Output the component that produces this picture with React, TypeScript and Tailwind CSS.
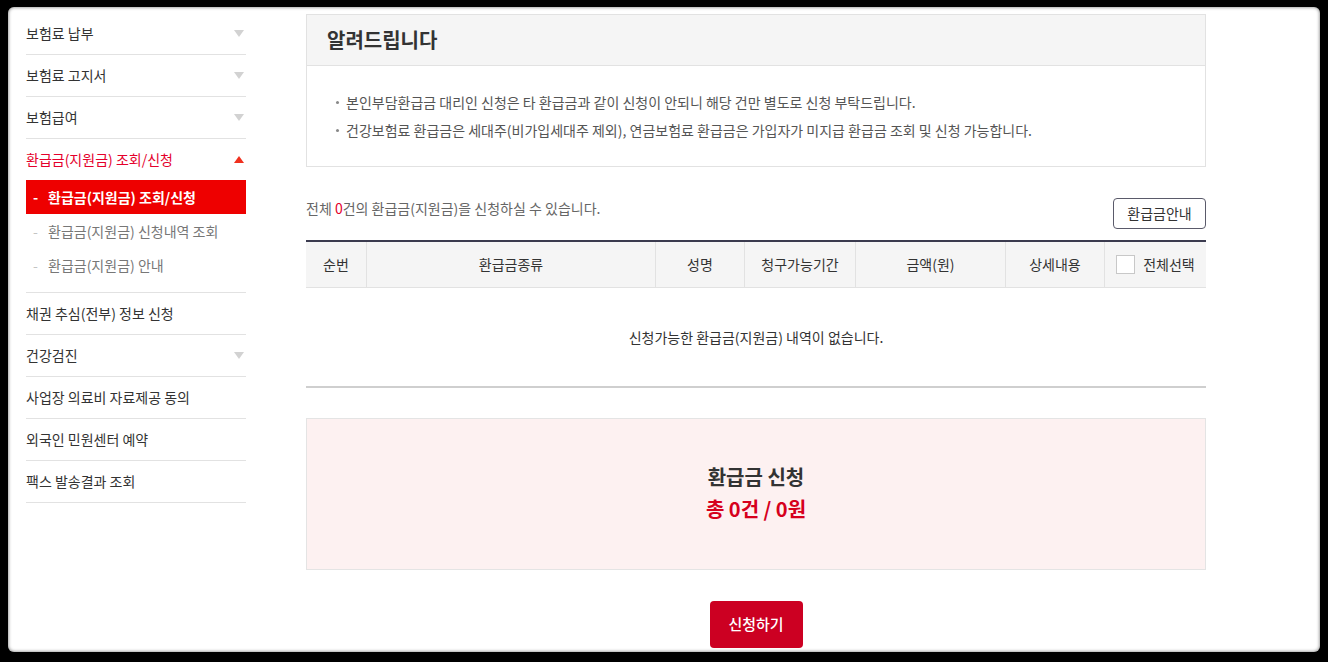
import React from "react"

const font = { fontFamily: '"Noto Sans CJK KR", "Noto Sans", sans-serif' }

type MenuItem = { label: string; arrow?: boolean }

const topMenu: MenuItem[] = [
    { label: "보험료 납부", arrow: true },
    { label: "보험료 고지서", arrow: true },
    { label: "보험급여", arrow: true },
]

const bottomMenu: MenuItem[] = [
    { label: "채권 추심(전부) 정보 신청" },
    { label: "건강검진", arrow: true },
    { label: "사업장 의료비 자료제공 동의" },
    { label: "외국인 민원센터 예약" },
    { label: "팩스 발송결과 조회" },
]

const subMenu = ["환급금(지원금) 조회/신청", "환급금(지원금) 신청내역 조회", "환급금(지원금) 안내"]

const columns = ["순번", "환급금종류", "성명", "청구가능기간", "금액(원)", "상세내용"]

function DownArrow() {
    return <span className="mr-[2px] inline-block h-0 w-0 border-x-[5px] border-t-[7px] border-x-transparent border-t-[#d2d2d2]" />
}

function MenuRow({ item }: { item: MenuItem }) {
    return (
        <div className="flex h-[42px] items-center justify-between border-b border-[#e2e2e2] text-[14px] text-[#333]">
            <span>{item.label}</span>
            {item.arrow && <DownArrow />}
        </div>
    )
}

function Sidebar() {
    return (
        <div className="w-[220px] shrink-0 pt-[6px]">
            {topMenu.map((m) => (
                <MenuRow key={m.label} item={m} />
            ))}
            <div className="border-b border-[#e2e2e2] pb-[10px]">
                <div className="flex h-[41px] items-center justify-between text-[14px] text-[#e4002b]">
                    <span>환급금(지원금) 조회/신청</span>
                    <span className="mr-[2px] inline-block h-0 w-0 border-x-[5px] border-b-[7px] border-x-transparent border-b-[#f0301e]" />
                </div>
                {subMenu.map((s, i) =>
                    i === 0 ? (
                        <div key={s} className="flex h-[34px] items-center bg-[#ee0000] text-[14px] font-bold text-white">
                            <span className="w-[22px] pl-[7px]">-</span>
                            <span>{s}</span>
                        </div>
                    ) : (
                        <div key={s} className="flex h-[34px] items-center text-[14px] text-[#777]">
                            <span className="w-[22px] pl-[7px] text-[#c4c4c4]">-</span>
                            <span>{s}</span>
                        </div>
                    )
                )}
            </div>
            {bottomMenu.map((m) => (
                <MenuRow key={m.label} item={m} />
            ))}
        </div>
    )
}

function Bullet({ children }: { children: React.ReactNode }) {
    return (
        <div className="flex items-center leading-[28px]">
            <span className="mr-[7px] inline-block h-[3px] w-[3px] rounded-full bg-[#888]" />
            <span>{children}</span>
        </div>
    )
}

const App = () => {
    return (
        <div className="h-[662px] w-[1328px] bg-black pb-[10px] pl-[8px] pr-[8px] pt-[7px]" style={font}>
            <div className="flex h-full gap-[60px] overflow-hidden rounded-[6px] bg-white pl-[18px] shadow-[inset_0_0_3px_1px_rgba(0,0,0,0.35)]">
                <Sidebar />
                <div className="w-[900px] shrink-0 pt-[7px]">
                    <div className="border border-[#e2e2e2]">
                        <div className="flex h-[51px] items-center border-b border-[#e2e2e2] bg-[#f5f5f5] pl-[20px] text-[20px] font-bold text-[#333]">
                            알려드립니다
                        </div>
                        <div className="py-[22px] pl-[29px] text-[14px] text-[#555]">
                            <Bullet>본인부담환급금 대리인 신청은 타 환급금과 같이 신청이 안되니 해당 건만 별도로 신청 부탁드립니다.</Bullet>
                            <Bullet>건강보험료 환급금은 세대주(비가입세대주 제외), 연금보험료 환급금은 가입자가 미지급 환급금 조회 및 신청 가능합니다.</Bullet>
                        </div>
                    </div>

                    <div className="mb-[11px] mt-[31px] flex items-start justify-between">
                        <span className="text-[14px] leading-[20px] text-[#666]">
                            전체 <span className="text-[#e4002b]">0</span>건의 환급금(지원금)을 신청하실 수 있습니다.
                        </span>
                        <button className="h-[31px] w-[93px] rounded-[4px] border border-[#5a5a6a] bg-white text-[14px] text-[#333]">
                            환급금안내
                        </button>
                    </div>

                    <div className="border-t-2 border-[#3b3b4f]">
                        <div className="grid h-[46px] grid-cols-[60px_289px_89px_111px_150px_99px_102px] border-b border-[#e2e2e2] bg-[#f5f5f5] text-[14px] text-[#333]">
                            {columns.map((c, i) => (
                                <div key={c} className={`flex items-center justify-center ${i > 0 ? "border-l border-[#e2e2e2]" : ""}`}>
                                    {c}
                                </div>
                            ))}
                            <div className="flex items-center justify-center gap-[8px] border-l border-[#e2e2e2]">
                                <span className="inline-block h-[19px] w-[19px] border border-[#c8c8c8] bg-white" />
                                <span>전체선택</span>
                            </div>
                        </div>
                        <div className="flex h-[100px] items-center justify-center border-b-2 border-[#cfcfcf] text-[14px] text-[#333]">
                            신청가능한 환급금(지원금) 내역이 없습니다.
                        </div>
                    </div>

                    <div className="mt-[30px] flex h-[152px] flex-col items-center justify-center border border-[#e4e4e4] bg-[#fdf1f1] pb-[2px] text-[20px] font-bold leading-[32px]">
                        <span className="text-[#333]">환급금 신청</span>
                        <span className="text-[#d6001c]">총 0건 / 0원</span>
                    </div>

                    <div className="mt-[31px] flex justify-center">
                        <button className="h-[47px] w-[93px] rounded-[4px] bg-[#cc0022] text-[15px] font-medium text-white">신청하기</button>
                    </div>
                </div>
            </div>
        </div>
    )
}

export default App
